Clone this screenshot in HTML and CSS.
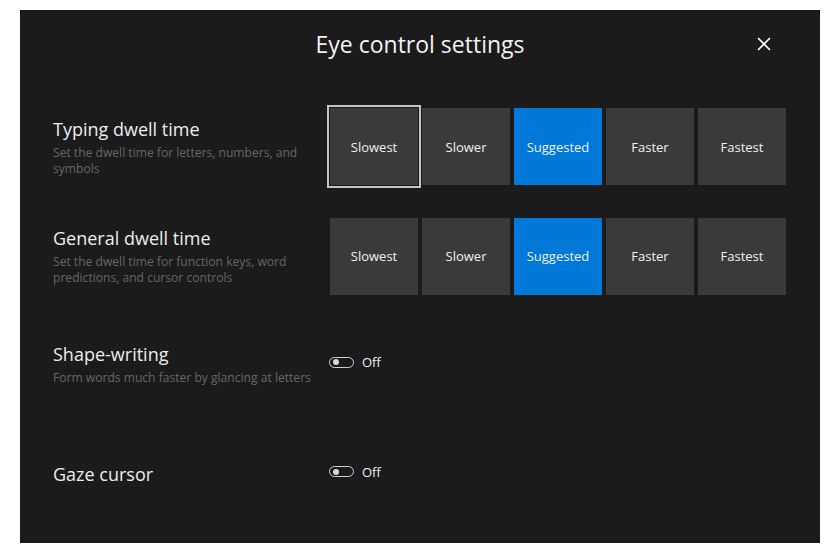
FILE: index.html
```html
<!DOCTYPE html>
<html lang="en">

<head>
    <meta charset="UTF-8">
    <meta name="viewport" content="width=device-width, initial-scale=1.0">
    <title>Eye control settings</title>
    <link rel="stylesheet" href="styles.css">
</head>

<body>
    <div class="panel">
        <div class="header">
            <h1 class="title">Eye control settings</h1>
            <button class="close" aria-label="Close">
                <svg width="14" height="14" viewBox="0 0 14 14">
                    <path d="M1 1 L13 13 M13 1 L1 13" stroke="#fff" stroke-width="1.6" fill="none" />
                </svg>
            </button>
        </div>

        <div class="setting">
            <div class="label">
                <p class="name">Typing dwell time</p>
                <p class="desc">Set the dwell time for letters, numbers, and symbols</p>
            </div>
            <div class="choices">
                <div class="choice focused">Slowest</div>
                <div class="choice">Slower</div>
                <div class="choice selected">Suggested</div>
                <div class="choice">Faster</div>
                <div class="choice">Fastest</div>
            </div>
        </div>

        <div class="setting">
            <div class="label">
                <p class="name">General dwell time</p>
                <p class="desc">Set the dwell time for function keys, word predictions, and cursor controls</p>
            </div>
            <div class="choices">
                <div class="choice">Slowest</div>
                <div class="choice">Slower</div>
                <div class="choice selected">Suggested</div>
                <div class="choice">Faster</div>
                <div class="choice">Fastest</div>
            </div>
        </div>

        <div class="setting short">
            <div class="label">
                <p class="name">Shape-writing</p>
                <p class="desc">Form words much faster by glancing at letters</p>
            </div>
            <div class="toggle">
                <span class="switch"></span>
                <span class="state">Off</span>
            </div>
        </div>

        <div class="setting last">
            <div class="label">
                <p class="name">Gaze cursor</p>
            </div>
            <div class="toggle">
                <span class="switch"></span>
                <span class="state">Off</span>
            </div>
        </div>
    </div>
</body>

</html>
```

FILE: styles.css
```css
body {
    margin: 0;
    padding: 10px 20px;
    background: #fff;
    font-family: "Open Sans", "Noto Sans", sans-serif;
}

.panel {
    width: 800px;
    height: 533px;
    background: #1b1b1b;
    color: #fff;
    box-sizing: border-box;
    padding: 0 33px;
}

.header {
    height: 82px;
    box-sizing: border-box;
    padding-bottom: 14px;
    display: flex;
    align-items: center;
    justify-content: center;
    position: relative;
}

.title {
    margin: 0;
    font-size: 23px;
    font-weight: 400;
    color: #f2f2f2;
}

.close {
    position: absolute;
    right: 9px;
    top: 20px;
    background: none;
    border: 0;
    padding: 0;
    width: 28px;
    height: 28px;
    display: flex;
    align-items: center;
    justify-content: center;
}

.setting {
    height: 109.5px;
    display: flex;
    align-items: center;
}

/* shape-writing row sits a touch higher */
.setting.short {
    height: 106px;
}

.setting.last {
    margin-top: 2px;
}

.label {
    width: 277px;
    flex-shrink: 0;
}

.name {
    margin: 0;
    font-size: 18px;
    color: #ededed;
    line-height: 24px;
}

.desc {
    margin: 4px 0 0;
    width: 272px;
    font-size: 12.1px;
    line-height: 16px;
    color: #666;
}

.choices {
    display: flex;
    gap: 4px;
}

.choice {
    width: 88px;
    height: 77px;
    background: #3a3a3a;
    display: flex;
    align-items: center;
    justify-content: center;
    font-size: 13px;
    color: #f0f0f0;
}

.choice.selected {
    background: #0078d7;
}

.choice.focused {
    outline: 2px solid #c4c4c4;
    outline-offset: 1px;
}

.toggle {
    display: flex;
    align-items: center;
    gap: 8px;
    margin-top: -4px;
}

.switch {
    width: 23px;
    height: 9px;
    border: 1.5px solid #d0d0d0;
    border-radius: 7px;
    position: relative;
    margin-left: -1px;
}

.switch::after {
    content: '';
    position: absolute;
    left: 2.5px;
    top: 1.5px;
    width: 6px;
    height: 6px;
    border-radius: 50%;
    background: #d8d8d8;
}

.state {
    font-size: 13px;
    color: #f0f0f0;
}
```
